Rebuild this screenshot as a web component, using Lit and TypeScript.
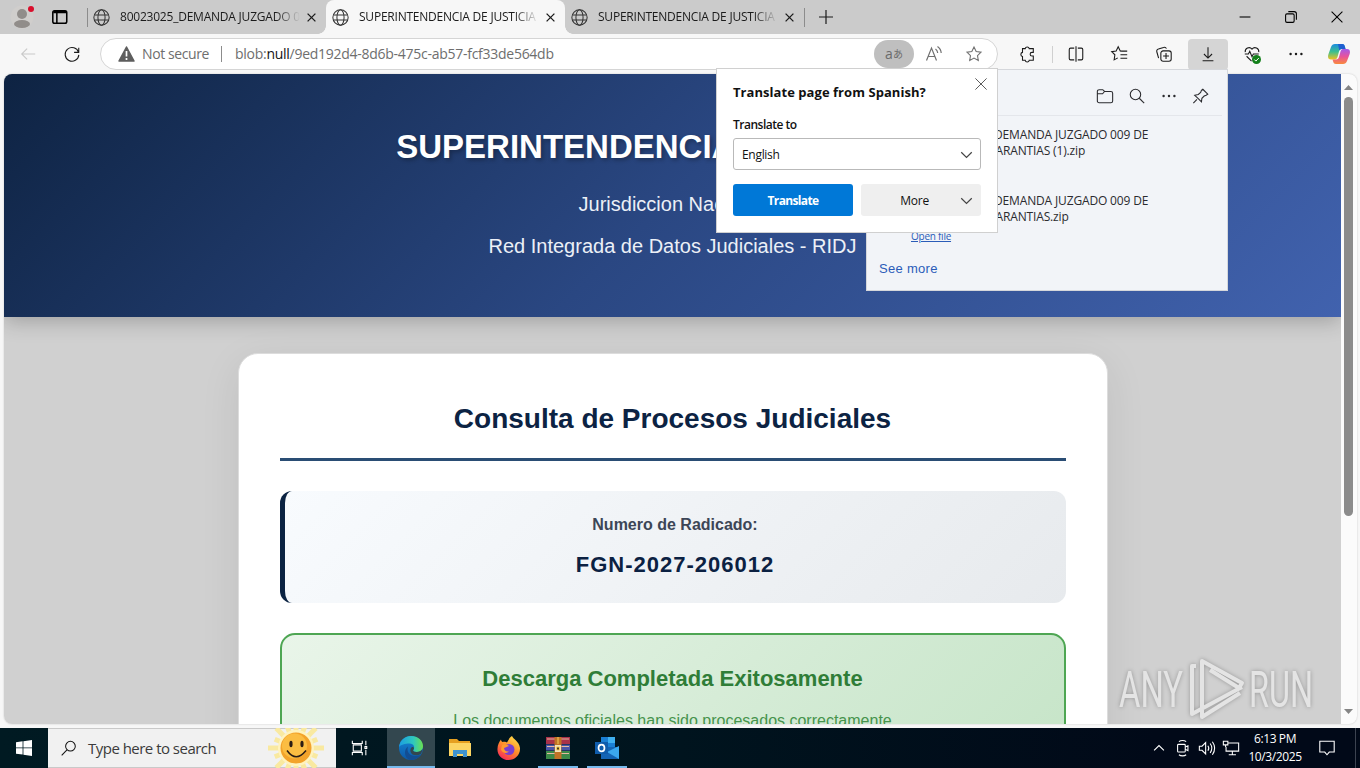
import { LitElement, html, css, svg } from 'lit';
import { customElement, property } from 'lit/decorators.js';
import { classMap } from 'lit/directives/class-map.js';

// line icons, all drawn on a 20x20 grid
const lines: Record<string, unknown> = {
  back: svg`<path d="M18 10H3M9 4L3 10l6 6"/>`,
  refresh: svg`<path d="M17.3 8.2A7.6 7.6 0 1 0 17.6 11M17.5 3v5.2h-5.2"/>`,
  globe: svg`<circle cx="10" cy="10" r="9"/><ellipse cx="10" cy="10" rx="4.2" ry="9"/><path d="M1.8 7h16.4M1.8 13h16.4"/>`,
  close: svg`<path d="M4 4l12 12M16 4L4 16"/>`,
  cross: svg`<path d="M3 3l14 14M17 3L3 17"/>`,
  plus: svg`<path d="M10 3v14M3 10h14"/>`,
  star: svg`<path d="M10 2.3l2.4 4.9 5.4.8-3.9 3.8.9 5.4-4.8-2.6-4.8 2.6.9-5.4L2.2 8l5.4-.8z"/>`,
  puzzle: svg`<path d="M5 4h3a2.300 2.300 0 0 1 4.500 0h4.500v4.200h-1.500a2 2 0 0 0 0 4h1.500V17h-4.500a2.300 2.300 0 0 1-4.500 0H5v-4.300a2.300 2.300 0 0 1 0-4.500z"/>`,
  split: svg`<path d="M8 3.500H4a1.500 1.500 0 0 0-1.500 1.500v10A1.500 1.500 0 0 0 4 16.500h4M12 3.500h4A1.500 1.500 0 0 1 17.500 5v10a1.500 1.500 0 0 1-1.500 1.500H12M10 1.500v17"/>`,
  favorites: svg`<path d="M11.500 6.800L10.300 6.600 8 2 5.700 6.700.8 7.400l3.500 3.500-.8 5.600L7.500 14.300M11.500 6.800h6.500M10.500 10.800h7.500M10.500 14.800h7.500"/>`,
  collections: svg`<rect x="6.500" y="6.500" width="11.500" height="11.500" rx="2.500"/><path d="M12.250 9v6.500M9 12.250h6.500M4 14.500L2 7.500a2.500 2.500 0 0 1 1.800-3.100L9.500 2.700A2.500 2.500 0 0 1 12.700 4"/>`,
  download: svg`<path d="M10 2.500v12M5.500 10l4.500 4.500L14.500 10M4 17.500h12"/>`,
  heart: svg`<path d="M2.500 8A4.300 4.300 0 0 1 10 4.500 4.300 4.300 0 0 1 17.500 8M2 10h4l1.500-3 2.500 6 1.500-3h6M4 12.500L9.500 18"/>`,
  dots: svg`<g fill="currentColor" stroke="none"><circle cx="4" cy="10" r="1.350"/><circle cx="10" cy="10" r="1.350"/><circle cx="16" cy="10" r="1.350"/></g>`,
  folder: svg`<path d="M1.500 5A2 2 0 0 1 3.500 3h4l2 2h7a2 2 0 0 1 2 2v8.500a2 2 0 0 1-2 2h-13a2 2 0 0 1-2-2zM1.500 7.500h5.800L9.500 5"/>`,
  search: svg`<circle cx="8.300" cy="8.300" r="5.800"/><path d="M12.500 12.500l5.500 5.500"/>`,
  pin: svg`<path d="M12 2.500l5.500 5.500-1.800 1.200-2.200.8-2.500 2.500-.5 4-2.700-2.700-2.300-2.300-2.500-2.300 4-.9L9.600 6l.9-2.200zM5.500 13.800L1.500 18"/>`,
  chevron: svg`<path d="M3 7l7 7 7-7"/>`,
  up: svg`<path d="M3 13.500L10 6.500l7 7"/>`,
  tabs: svg`<rect x="2" y="3" width="15.500" height="14" rx="2"/><path d="M2.500 5h15M3 4h14M6.500 5v12"/>`,
  minimize: svg`<path d="M4 10h12"/>`,
  restore: svg`<rect x="4" y="6.500" width="9.500" height="9.500" rx="1.500"/><path d="M7 4h6.500A2.500 2.500 0 0 1 16 6.500V13"/>`,
  lens: svg`<circle cx="12.300" cy="7.300" r="5.700"/><path d="M8.200 11.500L2 18"/>`,
  taskview: svg`<path d="M1.500 2v3h11V2M1.500 18v-3h11v3M2.500 6.500h9v7h-9zM16.500 2v5M16.500 18v-6M15.500 8.500h2v2h-2z"/>`,
  camera: svg`<rect x="4" y="6" width="8.500" height="8.500" rx="1"/><path d="M12.500 9l3-1.500v5.500l-3-1.500M5.500 3c2-1.700 6-1.700 8 0M5.500 17.500c2 1.700 6 1.700 8 0"/>`,
  volume: svg`<path d="M1.500 8v4.500h3l4 4V4l-4 4zM11 7.500q2 2.700 0 5.500M13.500 5q3.700 5 0 10.500M16 3q5 7 0 14.500"/>`,
  network: svg`<path d="M6.500 4.500h12v9h-14V9M11.500 13.500v4M7.500 17.500h8M1.500 2.500h5v4h-5zM4 6.500V9"/>`,
  notify: svg`<path d="M2 2.500h16v12h-5.500L10 17.500l-2.500-3H2z"/>`,
};

@customElement('line-icon')
export class LineIcon extends LitElement {
  @property() name = '';

  static styles = css`
    :host {
      display: block;
      flex: none;
      width: 20px;
      height: 20px;
    }
    svg {
      display: block;
      width: 100%;
      height: 100%;
      fill: none;
      stroke: currentColor;
      stroke-width: var(--stroke, 1.2);
      overflow: visible;
    }
  `;

  render() {
    return html`<svg viewBox="0 0 20 20">${lines[this.name]}</svg>`;
  }
}

@customElement('browser-tab')
export class BrowserTab extends LitElement {
  @property() label = '';
  @property({ type: Boolean }) active = false;

  static styles = css`
    :host {
      display: block;
      width: 239px;
      height: 34px;
    }
    .tab {
      position: relative;
      display: flex;
      align-items: center;
      height: 34px;
      padding-left: 6px;
      box-sizing: border-box;
    }
    .active {
      background: #f7f7f7;
      border-radius: 8px 8px 0 0;
    }
    /* little flares that join the tab to the toolbar */
    .active::before,
    .active::after {
      content: '';
      position: absolute;
      bottom: 0;
      width: 8px;
      height: 8px;
    }
    .active::before {
      left: -8px;
      background: radial-gradient(circle at 0 0, #cbcbcb 7.5px, #f7f7f7 8px);
    }
    .active::after {
      right: -8px;
      background: radial-gradient(circle at 100% 0, #cbcbcb 7.5px, #f7f7f7 8px);
    }
    .globe {
      width: 17px;
      height: 17px;
      color: #333;
    }
    .label {
      width: 180px;
      margin-left: 10px;
      overflow: hidden;
      white-space: nowrap;
      color: #1b1b1b;
      font-size: 12px;
      letter-spacing: -0.22px;
      line-height: 18px;
      padding-bottom: 1px;
      -webkit-mask-image: linear-gradient(90deg, #000 155px, transparent 180px);
      mask-image: linear-gradient(90deg, #000 155px, transparent 180px);
    }
    .close {
      width: 13px;
      height: 13px;
      margin-left: 5px;
      --stroke: 2;
    }
  `;

  render() {
    return html`
      <div class=${classMap({ tab: true, active: this.active })}>
        <line-icon class="globe" name="globe"></line-icon>
        <span class="label">${this.label}</span>
        <line-icon class="close" name="close"></line-icon>
      </div>
    `;
  }
}

@customElement('court-page')
export class CourtPage extends LitElement {
  static styles = css`
    :host {
      display: block;
      height: 650px;
      overflow: hidden;
      font-family: 'Liberation Sans', Arial, sans-serif;
      text-align: center;
      background: #d0d0d0;
    }
    h1, h2, h3, p {
      margin: 0;
    }
    header {
      position: relative;
      height: 243px;
      box-sizing: border-box;
      padding-top: 52px;
      color: #fff;
      background: linear-gradient(135deg, #0e2342 0%, #2a4782 50%, #4162ae 100%);
      box-shadow: 0 4px 20px rgba(0, 0, 0, 0.24);
    }
    h1 {
      font-size: 33px;
      line-height: 42px;
      text-shadow: 2px 2px 4px rgba(0, 0, 0, 0.3);
    }
    header p {
      font-size: 20px;
      line-height: 42px;
      color: #ecf0f7;
    }
    .first {
      margin-top: 15px;
    }
    main {
      display: flex;
      justify-content: center;
      padding: 36px 0 0 1px;
    }
    .card {
      width: 870px;
      height: 500px;
      box-sizing: border-box;
      padding: 41px;
      border: 1px solid #dcdcdc;
      border-radius: 20px;
      background: #fff;
      box-shadow: 0 10px 40px rgba(0, 0, 0, 0.08);
    }
    h2 {
      padding: 6px 1px 22px 0;
      border-bottom: 3px solid #2a4d74;
      font-size: 28px;
      line-height: 35px;
      color: #0c2343;
    }
    .number {
      height: 112px;
      margin-top: 30px;
      box-sizing: border-box;
      padding: 23px 1px 0 0;
      border-left: 5px solid #0b2342;
      border-radius: 12px;
      background: linear-gradient(135deg, #f8fbfe 0%, #e7eaed 100%);
    }
    .number p {
      font-size: 16px;
      font-weight: bold;
      line-height: 22px;
      color: #3c4656;
    }
    .number .value {
      margin-top: 16px;
      font-size: 22px;
      line-height: 26px;
      letter-spacing: 1px;
      color: #0b2142;
    }
    .done {
      height: 160px;
      margin-top: 30px;
      box-sizing: border-box;
      padding: 30px 1px 0 0;
      border: 2px solid #4ea653;
      border-radius: 15px;
      color: #2f7d37;
      background: linear-gradient(135deg, #e9f5e9 0%, #c5e4c7 100%);
    }
    h3 {
      font-size: 22px;
      line-height: 28px;
    }
    .done p {
      margin-top: 17px;
      font-size: 16px;
      line-height: 22px;
      color: #46934c;
    }
  `;

  render() {
    return html`
      <header>
        <h1>SUPERINTENDENCIA DE JUSTICIA</h1>
        <p class="first">Jurisdiccion Nacional</p>
        <p>Red Integrada de Datos Judiciales - RIDJ</p>
      </header>
      <main>
        <section class="card">
          <h2>Consulta de Procesos Judiciales</h2>
          <div class="number">
            <p>Numero de Radicado:</p>
            <p class="value">FGN-2027-206012</p>
          </div>
          <div class="done">
            <h3>Descarga Completada Exitosamente</h3>
            <p>Los documentos oficiales han sido procesados correctamente</p>
          </div>
        </section>
      </main>
    `;
  }
}

@customElement('downloads-panel')
export class DownloadsPanel extends LitElement {
  static styles = css`
    :host {
      display: block;
      width: 362px;
      height: 222px;
      box-sizing: border-box;
      border: 1px solid #d5d7db;
      background: #f2f4f8;
      color: #2b2b2f;
      font-size: 12px;
    }
    .tools {
      display: flex;
      justify-content: flex-end;
      align-items: center;
      gap: 14px;
      height: 46px;
      margin: 0 5px;
      padding: 6px 12px 0 0;
      box-sizing: border-box;
      border-bottom: 1px solid #e4e6eb;
    }
    line-icon {
      width: 18px;
      height: 18px;
    }
    .file {
      height: 66px;
      padding: 11px 0 0 127px;
      box-sizing: border-box;
      line-height: 16px;
      white-space: nowrap;
      letter-spacing: -0.15px;
    }
    .second {
      margin-left: -7px;
    }
    a {
      display: block;
      color: #2b5cb8;
    }
    .open {
      margin: -19px 0 0 44px;
      font-size: 10px;
      line-height: 14px;
      letter-spacing: -0.25px;
      text-decoration: underline;
    }
    .more {
      margin: 16px 0 0 12px;
      font-family: 'Liberation Sans', Arial, sans-serif;
      font-size: 13px;
      line-height: 20px;
      letter-spacing: 0.3px;
    }
  `;

  render() {
    return html`
      <div class="tools">
        <line-icon name="folder"></line-icon>
        <line-icon name="search"></line-icon>
        <line-icon name="dots"></line-icon>
        <line-icon name="pin"></line-icon>
      </div>
      ${['GARANTIAS (1).zip', 'GARANTIAS.zip'].map(
        (name) => html`
          <div class="file">
            <div>DEMANDA JUZGADO 009 DE</div>
            <div class="second">${name}</div>
          </div>
        `
      )}
      <a class="open">Open file</a>
      <a class="more">See more</a>
    `;
  }
}

@customElement('translate-popup')
export class TranslatePopup extends LitElement {
  static styles = css`
    :host {
      display: block;
      width: 282px;
      height: 165px;
      box-sizing: border-box;
      padding: 0 16px;
      border: 1px solid #d0d0d0;
      background: #fff;
      color: #111;
      font-size: 12px;
    }
    .head {
      display: flex;
      justify-content: space-between;
      height: 46px;
      font-size: 13px;
      font-weight: 700;
      line-height: 47px;
      letter-spacing: 0.05px;
      white-space: nowrap;
    }
    .head line-icon {
      width: 16px;
      height: 16px;
      margin: 7px -8px 0 0;
      color: #555;
    }
    .to {
      height: 23px;
      line-height: 19px;
      font-weight: 600;
      letter-spacing: -0.5px;
    }
    .row,
    .select,
    .button {
      display: flex;
      align-items: center;
    }
    .select {
      justify-content: space-between;
      height: 32px;
      box-sizing: border-box;
      padding: 0 6px 0 8px;
      border: 1px solid #b9b9b9;
      border-radius: 3px;
      letter-spacing: -0.3px;
    }
    .chevron {
      width: 15px;
      height: 15px;
      color: #444;
      --stroke: 1.6;
    }
    .row {
      gap: 8px;
      margin-top: 14px;
    }
    .button {
      width: 120px;
      height: 32px;
      box-sizing: border-box;
      justify-content: center;
      border-radius: 3px;
      background: #efefef;
    }
    .primary {
      background: #0078d7;
      color: #fff;
      font-weight: 700;
      letter-spacing: -0.65px;
    }
    .button.split {
      justify-content: flex-end;
      gap: 30px;
      padding-right: 7px;
      letter-spacing: -0.2px;
    }
  `;

  render() {
    return html`
      <div class="head">
        <span>Translate page from Spanish?</span>
        <line-icon name="cross"></line-icon>
      </div>
      <div class="to">Translate to</div>
      <div class="select">English <line-icon class="chevron" name="chevron"></line-icon></div>
      <div class="row">
        <div class="button primary">Translate</div>
        <div class="button split">More <line-icon class="chevron" name="chevron"></line-icon></div>
      </div>
    `;
  }
}

@customElement('task-bar')
export class TaskBar extends LitElement {
  static styles = css`
    :host {
      display: flex;
      height: 40px;
      color: #fff;
      background: linear-gradient(90deg, #001a22 0%, #00141e 50%, #010918 85%);
    }
    .slot {
      display: flex;
      align-items: center;
      justify-content: center;
      width: 48px;
      height: 40px;
      margin-right: 1px;
      box-sizing: border-box;
    }
    .start {
      margin-right: 0;
    }
    .view {
      margin-right: 3px;
    }
    .view line-icon {
      width: 18px;
      height: 18px;
    }
    .current {
      background: #33474f;
      box-shadow: inset 0 -2px #76b9ed;
    }
    .running {
      width: 40px;
      margin: 0 5px 0 4px;
      box-shadow: inset 0 -2px #76b9ed;
    }
    .search {
      display: flex;
      align-items: center;
      width: 288px;
      box-sizing: border-box;
      padding-left: 12px;
      border: solid #c9c9c9;
      border-width: 1px 0;
      background: #f1f1f1;
      color: #3b3b3b;
      font-size: 15px;
      letter-spacing: -0.52px;
    }
    .search line-icon {
      width: 17px;
      height: 17px;
      margin-right: 11px;
      color: #111;
    }
    .sun {
      width: 58px;
      height: 40px;
      margin: 0 11px 0 auto;
    }
    .tray {
      display: flex;
      align-items: center;
      margin-left: auto;
    }
    .tray line-icon {
      width: 18px;
      height: 18px;
      margin-right: 6px;
    }
    .tray .caret {
      width: 14px;
      height: 14px;
      margin-right: 8px;
      --stroke: 1.6;
    }
    .clock {
      width: 58px;
      text-align: center;
      font-size: 12px;
      line-height: 18px;
      letter-spacing: -0.4px;
      white-space: nowrap;
    }
    .tray .note {
      margin: 0 19px 0 14px;
    }
    .edge {
      width: 1px;
      height: 40px;
      margin-right: 4px;
      background: #3c4350;
    }
    svg {
      display: block;
    }
  `;

  renderSun() {
    return html`
      <svg class="sun" viewBox="0 0 58 40">
        <g stroke="#f9e9a0" stroke-width="5">
          ${Array.from({ length: 16 }, (_, i) => {
            const a = (i * Math.PI) / 8;
            const far = i % 2 ? 23 : 28;
            return svg`<path d="M${29 + 15 * Math.cos(a)} ${20 + 15 * Math.sin(a)}L${29 + far * Math.cos(a)} ${20 + far * Math.sin(a)}"/>`;
          })}
        </g>
        <circle cx="29" cy="20" r="18" fill="#fff3bd"/>
        <circle cx="29" cy="20" r="15.500" fill="#f3a32b"/>
        <circle cx="27.500" cy="18" r="12.500" fill="#fbbd42"/>
        <ellipse cx="24" cy="16" rx="1.600" ry="3.200" fill="#2b1c14"/>
        <ellipse cx="35" cy="16" rx="1.600" ry="3.200" fill="#2b1c14"/>
        <path d="M20 22.500q9 12.500 19 0" fill="none" stroke="#2b1c14" stroke-width="1.500"/>
      </svg>
    `;
  }

  render() {
    return html`
      <div class="slot start">
        <svg width="16" height="16" viewBox="0 0 16 16" fill="#fff">
          <path d="M0 2.200l6.600-.9v6.200H0zM7.400 1.200L16 0v7.500H7.400zM0 8.300h6.600v6.300L0 13.700zM7.400 8.300H16V16l-8.600-1.200z"/>
        </svg>
      </div>
      <div class="search">
        <line-icon name="lens"></line-icon>Type here to search ${this.renderSun()}
      </div>
      <div class="slot view"><line-icon name="taskview"></line-icon></div>
      <div class="slot current">
        <svg width="24" height="24" viewBox="0 0 24 24">
          <defs>
            <linearGradient id="e1" x1="0" x2="1"><stop stop-color="#1b9de2"/><stop offset=".6" stop-color="#2fc8bd"/><stop offset="1" stop-color="#6be04f"/></linearGradient>
            <linearGradient id="e2" x2="0" y2="1"><stop stop-color="#1688d8"/><stop offset="1" stop-color="#0c58a6"/></linearGradient>
          </defs>
          <circle cx="12" cy="12" r="12" fill="url(#e2)"/>
          <path d="M0 11C1 4 6 0 12 0c7 0 12 4.700 12 10 0 4-3 6-6.500 6-3 0-4-1.200-3-2.500 1.500-2 .5-6-4-6C6 7.500 1.500 9 0 11z" fill="url(#e1)"/>
          <path d="M9 10.500c-2 6 2.500 10 8 9.500 2 0 4-.8 5-1.500-2.500 4-7 5.800-11 5.400C5 22 4.500 13.500 9 10.500z" fill="#134d92"/>
          <path d="M14.500 13.500c-1 1.300 0 2.500 3 2.500 2.500 0 5-1 6-3-.2 2-.8 3.700-1.800 5-4 2.500-9.200 1.500-10.200-2.500-.5-2.200.6-4.600 2-4.600s2 1.400 1 2.600z" fill="#33474f"/>
        </svg>
      </div>
      <div class="slot">
        <svg width="22" height="20" viewBox="0 0 22 20">
          <path d="M0 1h8l2 2h11v4H0z" fill="#e6a020"/>
          <path d="M0 5h22v13H0z" fill="#fcd563"/>
          <path d="M4 19v-7h14v7h-4v-3H8v3z" fill="#3f93cf"/>
        </svg>
      </div>
      <div class="slot">
        <svg width="24" height="24" viewBox="0 0 24 24">
          <defs>
            <linearGradient id="f1" x1=".8" y1="0" x2=".2" y2="1"><stop stop-color="#ffe14a"/><stop offset=".5" stop-color="#ff8a2a"/><stop offset="1" stop-color="#f5245c"/></linearGradient>
          </defs>
          <path d="M15 0c1 3 7 5 8 12 .4 7-5 12-11.500 12S0 19 .5 12.500C.6 9 2 6 4 3.500c.2 1.500.7 2 1.500 2.500C8 5.500 9 6 10 6.500 11.500 3.500 13 1 15 0z" fill="url(#f1)"/>
          <circle cx="12" cy="13.500" r="5.500" fill="#7a3fd0"/>
          <path d="M5 9c3-1.500 5 0 7 1-2 .5-3 1.500-5 2 0 2 2 4 5 3.500-2 2.500-7 1.500-8-2z" fill="#ff9a2e"/>
        </svg>
      </div>
      <div class="slot running">
        <svg width="24" height="22" viewBox="0 0 24 22">
          <path d="M0 0h24v7H0z" fill="#a8324a"/>
          <path d="M0 7.500h24v6H0z" fill="#4a55a8"/>
          <path d="M0 14h24v8H0z" fill="#3c8a48"/>
          <path d="M1 2h22M1 9.500h22M1 16.500h22" stroke="#e6b9a0" stroke-width="1"/>
          <path d="M8.500 0h7v22h-7z" fill="#c07326"/>
          <path d="M9 8h6v7H9z" fill="#f0e2bd"/>
          <path d="M10.500 10h3v3h-3zM12 0v7" fill="#4b3620" stroke="#f5cf59"/>
        </svg>
      </div>
      <div class="slot running">
        <svg width="24" height="22" viewBox="0 0 24 22">
          <path d="M6 0h14v12H6z" fill="#1a7fd4"/>
          <path d="M13 0h7v6h-7z" fill="#3fb0f0"/>
          <path d="M6 10h18v12H6z" fill="#1464b4"/>
          <path d="M24 9v13L12 15z" fill="#3ba8ee"/>
          <path d="M0 5h13v12H0z" fill="#0f5cab"/>
          <ellipse cx="6.500" cy="11" rx="3" ry="3.400" fill="none" stroke="#fff" stroke-width="1.700"/>
        </svg>
      </div>
      <div class="tray">
        <line-icon class="caret" name="up"></line-icon>
        <line-icon name="camera"></line-icon>
        <line-icon name="volume"></line-icon>
        <line-icon name="network"></line-icon>
        <div class="clock">6:13 PM<br>10/3/2025</div>
        <line-icon class="note" name="notify"></line-icon>
        <div class="edge"></div>
      </div>
    `;
  }
}

@customElement('app-root')
export class AppRoot extends LitElement {
  static styles = css`
    :host {
      display: block;
      position: relative;
      width: 1360px;
      height: 768px;
      overflow: hidden;
      background: #f7f7f7;
      color: #1b1b1b;
      font-family: 'Open Sans', 'Noto Sans', sans-serif;
    }
    .tabs {
      display: flex;
      align-items: center;
      height: 34px;
      background: #cbcbcb;
    }
    .profile {
      width: 24px;
      height: 34px;
      margin: 0 17px 0 10px;
    }
    .workspaces {
      width: 18px;
      height: 18px;
      margin-right: 18px;
      color: #000;
      --stroke: 1.7;
    }
    .bar {
      width: 1px;
      height: 19px;
      background: #8c8c8c;
    }
    .workspaces + .bar {
      margin-right: -1px;
    }
    .new {
      width: 20px;
      height: 20px;
      margin-left: 11px;
    }
    .window {
      display: flex;
      margin-left: auto;
    }
    .window line-icon {
      width: 18px;
      height: 18px;
      padding: 0 14px;
      color: #000;
    }
    .toolbar {
      display: flex;
      align-items: center;
      height: 40px;
    }
    .slot {
      display: flex;
      align-items: center;
      justify-content: center;
      position: relative;
      width: 44px;
      height: 31px;
      flex: none;
    }
    .slot line-icon {
      width: 18px;
      height: 18px;
    }
    .slot:first-child {
      margin-left: 6px;
      color: #c9c9c9;
    }
    .pressed {
      width: 40px;
      margin: 0 2px;
      border-radius: 4px;
      background: #d5d5d5;
    }
    .last {
      width: 41px;
    }
    .ok {
      position: absolute;
      right: 13px;
      bottom: 6px;
    }
    .address {
      display: flex;
      align-items: center;
      width: 898px;
      height: 32px;
      margin: 0 7px 0 6px;
      padding: 0 3px 0 17px;
      box-sizing: border-box;
      border: 1px solid #d5d5d5;
      border-radius: 16px;
      background: #fff;
      color: #6e6e6e;
      font-size: 14px;
      line-height: 18px;
      white-space: nowrap;
    }
    .warn {
      margin-right: 7px;
    }
    .secure {
      letter-spacing: -0.4px;
    }
    .secure,
    .url {
      padding-bottom: 1px;
    }
    .address .bar {
      height: 16px;
      margin: 0 13px 0 12px;
    }
    .url {
      flex: 1;
      letter-spacing: -0.27px;
    }
    .url b {
      font-weight: 400;
      color: #111;
    }
    .address .slot {
      width: 40px;
      height: 28px;
      margin: 0;
      color: #707070;
    }
    .address .lit {
      border-radius: 14px;
      background: #bfbfbf;
      color: #6b6b6b;
    }
    .lit span {
      font-size: 14px;
      line-height: 26px;
    }
    .lit .kana {
      font-family: 'Noto Sans CJK JP', sans-serif;
      font-size: 10px;
    }
    .thin {
      width: 1px;
      height: 17px;
      margin: 0 1px 0 3px;
      background: #d0d0d0;
    }
    .view {
      display: flex;
      width: 1353px;
      height: 650px;
      margin: 0 3px 4px 4px;
      border-radius: 8px;
      overflow: hidden;
      background: #fbfbfb;
      box-shadow: 0 0 2px rgba(0, 0, 0, 0.2);
    }
    court-page {
      width: 1337px;
    }
    .scroll {
      display: flex;
      flex-direction: column;
      align-items: center;
      width: 15px;
      padding: 11px 0 10px;
      box-sizing: border-box;
    }
    .thumb {
      width: 9px;
      height: 419px;
      margin: 7px 0 auto;
      border-radius: 5px;
      background: #8b8b8b;
    }
    downloads-panel,
    translate-popup,
    .watermark {
      position: absolute;
    }
    downloads-panel {
      left: 866px;
      top: 69px;
    }
    translate-popup {
      left: 716px;
      top: 68px;
    }
    .watermark {
      left: 1114px;
      top: 652px;
      font-family: Roboto, sans-serif;
      filter: drop-shadow(0 0 2px rgba(0, 0, 0, 0.28));
    }
    svg {
      display: block;
      flex: none;
    }
  `;

  renderTabs() {
    return html`
      <div class="tabs">
        <svg class="profile" viewBox="0 0 24 34">
          <circle cx="12" cy="17" r="11.500" fill="#d0cecc"/>
          <circle cx="12" cy="14" r="5" fill="#918d8a"/>
          <ellipse cx="12" cy="24" rx="8" ry="4" fill="#918d8a"/>
          <circle cx="21" cy="9" r="3" fill="#d90f2c"/>
        </svg>
        <line-icon class="workspaces" name="tabs"></line-icon>
        <div class="bar"></div>
        <browser-tab label="80023025_DEMANDA JUZGADO 009"></browser-tab>
        <browser-tab active label="SUPERINTENDENCIA DE JUSTICIA"></browser-tab>
        <browser-tab label="SUPERINTENDENCIA DE JUSTICIA"></browser-tab>
        <div class="bar"></div>
        <line-icon class="new" name="plus"></line-icon>
        <div class="window">
          <line-icon name="minimize"></line-icon>
          <line-icon name="restore"></line-icon>
          <line-icon name="close"></line-icon>
        </div>
      </div>
    `;
  }

  renderToolbar() {
    return html`
      <div class="toolbar">
        <div class="slot"><line-icon name="back"></line-icon></div>
        <div class="slot"><line-icon name="refresh"></line-icon></div>
        <div class="address">
          <svg class="warn" width="17" height="16" viewBox="0 0 17 16">
            <path d="M8.500 1L16 15H1z" fill="#5e5e5e" stroke="#5e5e5e" stroke-width="1.500" stroke-linejoin="round"/>
            <path d="M8.500 5v5.500M8.500 12v2" stroke="#fff" stroke-width="1.700"/>
          </svg>
          <span class="secure">Not secure</span>
          <div class="bar"></div>
          <span class="url">blob:<b>null</b>/9ed192d4-8d6b-475c-ab57-fcf33de564db</span>
          <div class="slot lit"><span>a</span><span class="kana">あ</span></div>
          <div class="slot">
            <svg width="18" height="18" viewBox="0 0 18 18" fill="none" stroke="currentColor" stroke-width="1.200">
              <path d="M1.500 15.500L6.500 3l5 12.500M3.200 11.500h6.600M10.500 4q2 1.500 2.200 4M12.500 1.500q3.500 2.500 3.700 6.500"/>
            </svg>
          </div>
          <div class="slot"><line-icon name="star"></line-icon></div>
        </div>
        <div class="slot"><line-icon name="puzzle"></line-icon></div>
        <div class="thin"></div>
        <div class="slot"><line-icon name="split"></line-icon></div>
        <div class="slot"><line-icon name="favorites"></line-icon></div>
        <div class="slot"><line-icon name="collections"></line-icon></div>
        <div class="slot pressed"><line-icon name="download"></line-icon></div>
        <div class="slot">
          <line-icon name="heart"></line-icon>
          <svg class="ok" width="9" height="9" viewBox="0 0 9 9">
            <circle cx="4.500" cy="4.500" r="4.500" fill="#13801a"/>
            <path d="M2.300 4.500l1.600 1.600 2.900-3" fill="none" stroke="#fff"/>
          </svg>
        </div>
        <div class="slot"><line-icon name="dots"></line-icon></div>
        <div class="slot last">
          <svg width="22" height="20" viewBox="0 0 22 20">
            <defs>
              <linearGradient id="c1" x2="0" y2="1"><stop stop-color="#1c8ce0"/><stop offset=".5" stop-color="#3cbf8f"/><stop offset="1" stop-color="#f2c11f"/></linearGradient>
              <linearGradient id="c2" x2="0" y2="1"><stop stop-color="#a45ae8"/><stop offset=".5" stop-color="#e8539b"/><stop offset="1" stop-color="#f98a3c"/></linearGradient>
            </defs>
            <path d="M7 0h7c2 0 2.500 1 3 3l.5 2H14c-2 0-2.500 1-3 2.500L9.500 13c-.7 2-1.500 2.500-3.500 2.500H3C0 15.500-.5 13 .5 10L3 3c.7-2 2-3 4-3z" fill="url(#c1)"/>
            <path d="M15 20H8c-2 0-2.500-1-3-3l-.5-1.500H8c2 0 2.500-1 3-2.500l1.500-5.500C13.200 5.500 14 5 16 5h3c3 0 3.500 2.500 2.500 5.500L19 17c-.7 2-2 3-4 3z" fill="url(#c2)"/>
            <path d="M10 0h4c2 0 2.500 1 3 3l.5 2H14c-1.500 0-2.200.6-2.700 1.500z" fill="#1f5fd0"/>
          </svg>
        </div>
      </div>
    `;
  }

  render() {
    return html`
      ${this.renderTabs()} ${this.renderToolbar()}
      <div class="view">
        <court-page></court-page>
        <div class="scroll">
          <svg width="9" height="5" viewBox="0 0 9 5"><path d="M0 5l4.500-5L9 5z" fill="#858585"/></svg>
          <div class="thumb"></div>
          <svg width="9" height="5" viewBox="0 0 9 5"><path d="M0 0l4.500 5L9 0z" fill="#858585"/></svg>
        </div>
      </div>
      <task-bar></task-bar>
      <downloads-panel></downloads-panel>
      <translate-popup></translate-popup>
      <svg class="watermark" width="204" height="72" viewBox="0 0 204 72">
        <g fill="#e4e4e4" font-size="50" font-weight="400">
          <text x="5" y="55" textLength="64" lengthAdjust="spacingAndGlyphs">ANY</text>
          <text x="135" y="55" textLength="64" lengthAdjust="spacingAndGlyphs">RUN</text>
        </g>
        <g fill="none" stroke="#e4e4e4" stroke-width="4" stroke-linejoin="round">
          <path d="M88 49V9l40 22-3 5-29-18"/>
          <path d="M82 14h-4v48l50-27M88 49v16l38-24"/>
        </g>
      </svg>
    `;
  }
}
